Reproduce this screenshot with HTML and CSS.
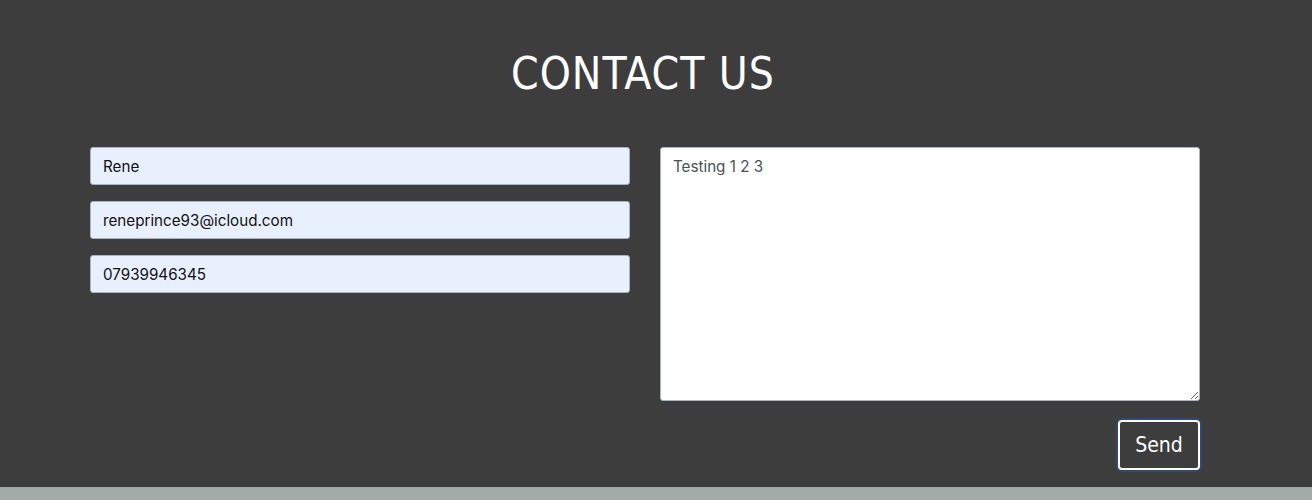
FILE: index.html
```html
<!DOCTYPE html>
<html>
<head>
<meta charset="utf-8">
<link rel="stylesheet" href="styles.css">
</head>
<body>
<section class="contact">
  <h1 class="title">CONTACT US</h1>
  <form class="form">
    <div class="col-left">
      <input class="field" type="text" value="Rene">
      <input class="field" type="text" value="reneprince93@icloud.com">
      <input class="field" type="text" value="07939946345">
    </div>
    <div class="col-right">
      <textarea class="message">Testing 1 2 3</textarea>
      <div class="actions"><button type="button" class="send">Send</button></div>
    </div>
  </form>
</section>
<footer class="band"></footer>
</body>
</html>
```

FILE: styles.css
```css
html, body {
  margin: 0;
  padding: 0;
  background: #3d3d3d;
}
.contact {
  background: #3d3d3d;
  height: 487px;
  box-sizing: border-box;
  padding-top: 48px;
}
.title {
  margin: 0;
  width: 1110px;
  margin-left: 88px;
  text-align: center;
  font-family: "DejaVu Sans Condensed", "DejaVu Sans", sans-serif;
  font-stretch: condensed;
  font-weight: normal;
  color: #ffffff;
  font-size: 44px;
  line-height: 52px;
  letter-spacing: 1px;
}
.form {
  margin: 47px 0 0 90px;
  width: 1110px;
  display: grid;
  grid-template-columns: 540px 540px;
  column-gap: 30px;
}
.col-left {
  display: flex;
  flex-direction: column;
  gap: 16px;
}
.field {
  box-sizing: border-box;
  width: 540px;
  height: 38px;
  border: 1px solid #aab2bd;
  border-radius: 3px;
  background: #e8f0fe;
  padding: 0 12px;
  font-family: "Inter", "Liberation Sans", sans-serif;
  font-size: 15.2px;
  color: #111;
  outline: none;
}
.col-right {
  display: flex;
  flex-direction: column;
}
.message {
  box-sizing: border-box;
  width: 540px;
  height: 254px;
  border: 1px solid #aab2bd;
  border-radius: 3px;
  background: #fff;
  padding: 9px 12px;
  font-family: "Inter", "Liberation Sans", sans-serif;
  font-size: 15.2px;
  color: #495057;
  resize: vertical;
  outline: none;
}
.actions {
  display: flex;
  justify-content: flex-end;
  margin-top: 19px;
}
.send {
  box-sizing: border-box;
  width: 82px;
  height: 50px;
  background: #3d3d3d;
  color: #fff;
  border: 2px solid #ffffff;
  border-radius: 4px;
  box-shadow: 0 0 0 2px #2d4a78;
  font-family: "DejaVu Sans Condensed", "DejaVu Sans", sans-serif;
  font-stretch: condensed;
  font-size: 21px;
  padding: 0;
}
.band {
  height: 13px;
  background: #a4aaa8;
}
```
